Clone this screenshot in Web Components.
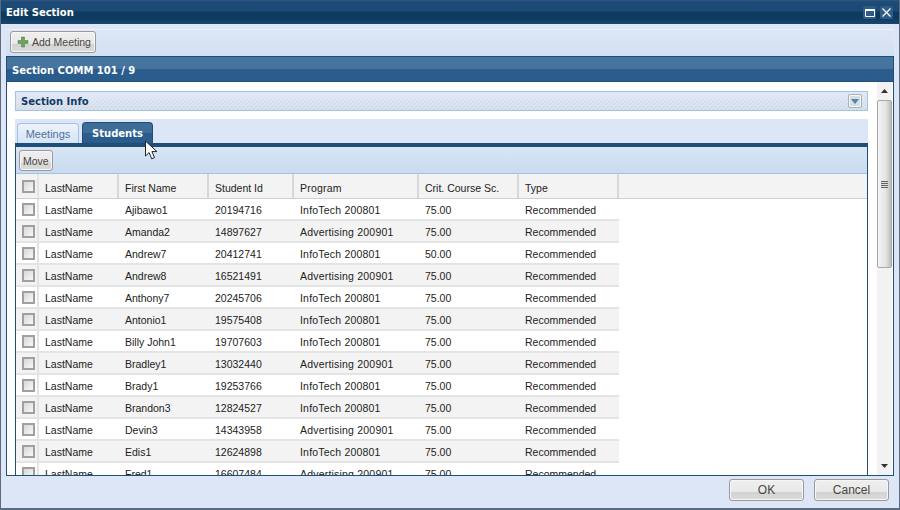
<!DOCTYPE html>
<html>
<head>
<meta charset="utf-8">
<title>Edit Section</title>
<style>
html, body { margin: 0; padding: 0; background: #dce6f6; }
body { font: 11px "Liberation Sans", Arial, sans-serif; color: #222; }
</style>
</head>
<body>
<edit-window heading="Edit Section">
  <app-button slot="toolbar" icon="add">Add Meeting</app-button>
  <section-panel heading="Section COMM 101 / 9">
    <collapse-bar>Section Info</collapse-bar>
    <tab-strip></tab-strip>
    <students-grid></students-grid>
  </section-panel>
  <app-button slot="footer" wide>OK</app-button>
  <app-button slot="footer" wide>Cancel</app-button>
</edit-window>
<script>
const windowTemplate = document.createElement('template');
windowTemplate.innerHTML = `
<style>
:host {
    display: flex;
    flex-direction: column;
    position: relative;
    box-sizing: border-box;
    width: 900px;
    height: 510px;
    overflow: hidden;
    background: #dce6f6;
    border: solid #5b6b80;
    border-width: 0 1px 2px 1px;
}
.title {
    display: flex;
    align-items: center;
    justify-content: space-between;
    height: 24px;
    margin: 0 -1px;
    padding: 0 7px 0 6px;
    box-sizing: border-box;
    flex: none;
    background: linear-gradient(#33587f 0, #1d4a76 2px, #1b4a75 11px, #0f3a60 12px, #0f3a60 18px, #174670 24px);
    color: #fff;
    font: bold 10px "DejaVu Sans", Verdana, sans-serif;
}
.tools { display: flex; gap: 4px; align-self: flex-start; margin-top: 6px; }
.tool {
    width: 13px;
    height: 13px;
    border-radius: 2px;
    background: #2f5c87;
    display: flex;
    align-items: center;
    justify-content: center;
}
.bar {
    flex: none;
    height: 27px;
    box-sizing: border-box;
    padding: 1px 0 0 4px;
    margin: 5px 5px 0 5px;
    background: linear-gradient(#dce6f6, #d3e0f3);
    border-top: 1px solid #eef3fb;
}
.main { flex: none; height: 420px; padding: 0 5px; box-sizing: border-box; }
.foot {
    flex: 1;
    display: flex;
    justify-content: flex-end;
    align-items: flex-start;
    gap: 10px;
    padding: 3px 10px 0 0;
}
.cursor { position: absolute; left: 143px; top: 140px; }
</style>
<div class="title">
  <span></span>
  <div class="tools">
    <div class="tool"><svg width="10" height="8" viewBox="0 0 10 8"><path d="M.5 .5h9v7h-9z" fill="none" stroke="#fff"/><path d="M0 1h10" stroke="#fff" stroke-width="2"/></svg></div>
    <div class="tool"><svg width="9" height="9" viewBox="0 0 9 9"><path d="M.5 .5l8 8M8.500 .5l-8 8" fill="none" stroke="#fff" stroke-width="1.200"/></svg></div>
  </div>
</div>
<div class="bar"><slot name="toolbar"></slot></div>
<div class="main"><slot></slot></div>
<div class="foot"><slot name="footer"></slot></div>
<svg class="cursor" width="18" height="21" viewBox="0 0 18 21"><path d="M1.5 1v15l3.600-3.400 2.600 6.200 2.800-1.200-2.600-6h5z" fill="#fff" stroke="#222" stroke-width="1"/></svg>
`;

class EditWindow extends HTMLElement {
    constructor() {
        super();
        this.attachShadow({mode: 'open'})
            .appendChild(windowTemplate.content.cloneNode(true));
        this.shadowRoot.querySelector('.title span').textContent = this.getAttribute('heading');
    }
}
customElements.define('edit-window', EditWindow);

const buttonTemplate = document.createElement('template');
buttonTemplate.innerHTML = `
<style>
:host {
    display: inline-flex;
    align-items: center;
    justify-content: center;
    box-sizing: border-box;
    height: 22px;
    padding: 0 4px 0 6px;
    gap: 3px;
    border: 1px solid #9a9a9a;
    border-radius: 3px;
    box-shadow: inset 0 0 0 1px #f6f6f6;
    background: linear-gradient(#efefef 0, #e8e8e8 60%, #d2d2d2 62%, #dcdcdc 100%);
    font: 10.5px "Liberation Sans", Arial, sans-serif;
    color: #4a4640;
}
:host([wide]) { width: 75px; padding: 0; font-size: 12px; }
svg { display: none; }
:host([icon]) svg { display: block; }
</style>
<svg width="12" height="12" viewBox="0 0 12 12"><path d="M4.500 1h3v3.500h3.500v3h-3.500v3.500h-3v-3.500h-3.500v-3h3.500z" fill="#6da35c" stroke="#4b7a3a" stroke-width=".5"/></svg>
<slot></slot>
`;

class AppButton extends HTMLElement {
    constructor() {
        super();
        this.attachShadow({mode: 'open'})
            .appendChild(buttonTemplate.content.cloneNode(true));
    }
}
customElements.define('app-button', AppButton);

const panelTemplate = document.createElement('template');
panelTemplate.innerHTML = `
<style>
:host { display: flex; flex-direction: column; height: 420px; box-sizing: border-box; border: solid #1f4e79; border-width: 0 1px 1px 1px; }
.head {
    flex: none;
    height: 26px;
    box-sizing: border-box;
    padding: 2px 0 0 5px;
    display: flex;
    align-items: center;
    border-top: 1px solid #1f4e79;
    border-bottom: 1px solid #1f4e79;
    background:
        linear-gradient(transparent 12px, #2a5d8e 12px),
        repeating-linear-gradient(135deg, #44719c 0 1.414px, #4a77a1 1.414px 2.828px);
    color: #fff;
    font: bold 10px "DejaVu Sans", Verdana, sans-serif;
}
.body { flex: 1; display: flex; min-height: 0; background: #fff; }
.content { flex: 1; min-width: 0; overflow: hidden; padding: 9px 9px 0 8px; }
</style>
<div class="head"></div>
<div class="body">
  <div class="content"><slot></slot></div>
  <v-scrollbar></v-scrollbar>
</div>
`;

class SectionPanel extends HTMLElement {
    constructor() {
        super();
        this.attachShadow({mode: 'open'})
            .appendChild(panelTemplate.content.cloneNode(true));
        this.shadowRoot.querySelector('.head').textContent = this.getAttribute('heading');
    }
}
customElements.define('section-panel', SectionPanel);

const scrollTemplate = document.createElement('template');
scrollTemplate.innerHTML = `
<style>
:host {
    flex: none;
    display: flex;
    flex-direction: column;
    align-items: center;
    width: 15px;
    margin-right: 1px;
    background: #f2f2f2;
}
.arrow { flex: none; height: 18px; display: flex; align-items: center; justify-content: center; }
.thumb {
    flex: none;
    box-sizing: border-box;
    width: 15px;
    height: 168px;
    border: 1px solid #a8a8a8;
    border-radius: 2px;
    background: linear-gradient(90deg, #f4f4f4, #e4e4e4 60%, #bdbdbd);
    display: flex;
    align-items: center;
    justify-content: center;
}
.grip { width: 7px; height: 7px; background: repeating-linear-gradient(#666 0 1px, #ddd 1px 2px); }
.fill { flex: 1; }
</style>
<div class="arrow"><svg width="7" height="4"><path d="M3.500 0L7 4H0z" fill="#333"/></svg></div>
<div class="thumb"><div class="grip"></div></div>
<div class="fill"></div>
<div class="arrow"><svg width="7" height="4"><path d="M0 0h7L3.500 4z" fill="#333"/></svg></div>
`;

class VScrollbar extends HTMLElement {
    constructor() {
        super();
        this.attachShadow({mode: 'open'})
            .appendChild(scrollTemplate.content.cloneNode(true));
    }
}
customElements.define('v-scrollbar', VScrollbar);

const collapseTemplate = document.createElement('template');
collapseTemplate.innerHTML = `
<style>
:host {
    display: flex;
    align-items: center;
    justify-content: space-between;
    box-sizing: border-box;
    height: 20px;
    padding: 0 5px 0 5px;
    border: 1px solid #a3c2e6;
    background:
        repeating-linear-gradient(135deg, rgba(255,255,255,.28) 0 1.414px, transparent 1.414px 2.828px),
        linear-gradient(#dde6f5, #ced9e8);
    color: #123a63;
    font: bold 10px "DejaVu Sans", Verdana, sans-serif;
}
.toggle {
    box-sizing: border-box;
    width: 14px;
    height: 14px;
    border: 1px solid #a9b0b8;
    box-shadow: inset 0 0 0 1px #f4f7fb;
    border-radius: 2px;
    background: #d2dfe6;
    display: flex;
    align-items: center;
    justify-content: center;
}
</style>
<slot></slot>
<div class="toggle"><svg width="8" height="5"><path d="M0 0h8L4 5z" fill="#5d7f9f"/></svg></div>
`;

class CollapseBar extends HTMLElement {
    constructor() {
        super();
        this.attachShadow({mode: 'open'})
            .appendChild(collapseTemplate.content.cloneNode(true));
    }
}
customElements.define('collapse-bar', CollapseBar);

const tabsTemplate = document.createElement('template');
tabsTemplate.innerHTML = `
<style>
:host {
    display: flex;
    align-items: flex-end;
    box-sizing: border-box;
    height: 24px;
    margin-top: 8px;
    padding: 0 0 0 2px;
    gap: 3px;
    background: #dce6f6;
}
.tab {
    box-sizing: border-box;
    display: flex;
    align-items: center;
    justify-content: center;
    height: 20px;
    width: 62px;
    border: 1px solid #a3c2e6;
    border-bottom: 0;
    border-radius: 4px 4px 0 0;
    background: linear-gradient(#edf3fb, #d5e4f6);
    color: #4f7398;
    font: 11px "Liberation Sans", Arial, sans-serif;
}
.active {
    height: 21px;
    width: 71px;
    border-color: #1f4e79;
    background: linear-gradient(#3f6d99 0, #3f6d99 50%, #2a5d8e 52%, #2a5d8e 100%);
    color: #fff;
    font: bold 10px "DejaVu Sans", Verdana, sans-serif;
}
</style>
<div class="tab">Meetings</div>
<div class="tab active">Students</div>
`;

class TabStrip extends HTMLElement {
    constructor() {
        super();
        this.attachShadow({mode: 'open'})
            .appendChild(tabsTemplate.content.cloneNode(true));
    }
}
customElements.define('tab-strip', TabStrip);

const STUDENTS = [
    ['Ajibawo1', '20194716', 'InfoTech 200801', '75.00'],
    ['Amanda2', '14897627', 'Advertising 200901', '75.00'],
    ['Andrew7', '20412741', 'InfoTech 200801', '50.00'],
    ['Andrew8', '16521491', 'Advertising 200901', '75.00'],
    ['Anthony7', '20245706', 'InfoTech 200801', '75.00'],
    ['Antonio1', '19575408', 'InfoTech 200801', '75.00'],
    ['Billy John1', '19707603', 'InfoTech 200801', '75.00'],
    ['Bradley1', '13032440', 'Advertising 200901', '75.00'],
    ['Brady1', '19253766', 'InfoTech 200801', '75.00'],
    ['Brandon3', '12824527', 'InfoTech 200801', '75.00'],
    ['Devin3', '14343958', 'Advertising 200901', '75.00'],
    ['Edis1', '12624898', 'InfoTech 200801', '75.00'],
    ['Fred1', '16607484', 'Advertising 200901', '75.00']
];
const HEADERS = ['LastName', 'First Name', 'Student Id', 'Program', 'Crit. Course Sc.', 'Type'];

const gridTemplate = document.createElement('template');
gridTemplate.innerHTML = `
<style>
:host {
    display: block;
    box-sizing: border-box;
    border: solid #1f4e79;
    border-width: 4px 1px 0 1px;
    background: #fff;
    font: 10.5px "Liberation Sans", Arial, sans-serif;
    color: #222;
}
.tbar {
    height: 27px;
    box-sizing: border-box;
    padding: 3px 0 0 3px;
    background: linear-gradient(#d8e5f4, #c9dbf0);
    border-bottom: 1px solid #a3c2e6;
}
.row {
    display: grid;
    grid-template-columns: 23px 80px 90px 85px 125px 100px 100px;
    width: 603px;
    height: 22px;
    box-sizing: border-box;
    border-bottom: 2px solid #e4e4e4;
}
.row:nth-of-type(odd) { background: #f3f3f3; }
.head {
    width: auto;
    height: 25px;
    grid-template-columns: 23px 80px 90px 85px 125px 100px 100px 1fr;
    background: linear-gradient(#fafafa, #ebebeb);
    border-bottom: 1px solid #d0d0d0;
}
.cell { padding: 1px 0 0 6px; line-height: 21px; white-space: nowrap; overflow: hidden; }
.head .cell { border-right: 2px solid #d8d8d8; padding: 2px 0 0 6px; line-height: 24px; }
.head .cell:last-child { border-right: 0; }
.wide { letter-spacing: .2px; }
.head .check, .check { padding: 0 0 0 6px; border-right: 2px solid #e4e4e4; display: flex; align-items: center; }
.box {
    box-sizing: border-box;
    width: 13px;
    height: 13px;
    border: 2px solid #a0a0a0;
    background: linear-gradient(135deg, #d8d8d8, #f8f8f8);
}
app-button { height: 21px; padding: 0 3px; }
</style>
<div class="tbar"><app-button>Move</app-button></div>
<div class="rows"></div>
`;

class StudentsGrid extends HTMLElement {
    constructor() {
        super();
        this.attachShadow({mode: 'open'})
            .appendChild(gridTemplate.content.cloneNode(true));
    }

    connectedCallback() {
        const rows = this.shadowRoot.querySelector('.rows');
        rows.appendChild(this._row(HEADERS.concat(''), 'row head'));
        STUDENTS.forEach(s => {
            rows.appendChild(this._row(['LastName', s[0], s[1], s[2], s[3], 'Recommended'], 'row'));
        });
    }

    _row(values, className) {
        const row = document.createElement('div');
        row.className = className;
        const check = document.createElement('div');
        check.className = 'cell check';
        check.innerHTML = '<div class="box"></div>';
        row.appendChild(check);
        values.forEach((value, i) => {
            const cell = document.createElement('div');
            cell.className = i === 3 ? 'cell wide' : 'cell';
            cell.textContent = value;
            row.appendChild(cell);
        });
        return row;
    }
}
customElements.define('students-grid', StudentsGrid);
</script>
</body>
</html>
